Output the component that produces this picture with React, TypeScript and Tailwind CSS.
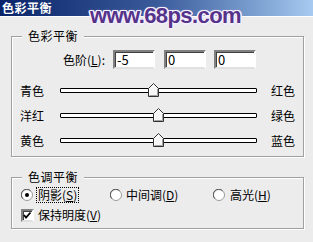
import React from "react";

function Thumb({ cls }: { cls: string }) {
  return (
    <svg className={"absolute top-[-6px] " + cls} width="11" height="14" viewBox="0 0 11 14">
      <polygon points="0.5,5.5 5.5,0.5 10.5,5.5 10.5,13.5 0.5,13.5" fill="#f6f6f6" stroke="#303030" />
      <polyline points="1.5,12.5 1.5,6 5.5,1.8" fill="none" stroke="#ffffff" />
      <polyline points="9.5,6 9.5,12.5 1.5,12.5" fill="none" stroke="#a0a0a0" />
    </svg>
  );
}

function SliderRow({ left, right, thumb }: { left: string; right: string; thumb: string }) {
  return (
    <div className="flex items-center h-[25px]">
      <div className="w-[40px] leading-[14px]">{left}</div>
      <div className="relative w-[197px] h-[5px] border border-black bg-white rounded-[1px]">
        <Thumb cls={thumb} />
      </div>
      <div className="ml-auto leading-[14px]">{right}</div>
    </div>
  );
}

function Box({ value }: { value: string }) {
  return (
    <div className="w-[42px] h-[19px] border-2 border-t-[#808080] border-l-[#808080] border-r-white border-b-[#e0e0e0] bg-white shadow-[inset_1px_1px_0_#404040] flex items-center pl-[2px] text-[13px] leading-none">
      {value}
    </div>
  );
}

function Radio({ checked }: { checked?: boolean }) {
  return (
    <svg width="12" height="12" viewBox="0 0 12 12" className="shrink-0">
      <circle cx="6" cy="6" r="5.5" fill="#ffffff" stroke="#9a9a9a" />
      <path d="M1.8 9.5 A5 5 0 0 1 9.5 1.8" fill="none" stroke="#505050" />
      {checked && <circle cx="6" cy="6" r="2" fill="#000000" />}
    </svg>
  );
}

export default function App() {
  return (
    <div className="relative w-[313px] h-[242px] bg-[#ececec] overflow-hidden font-['Noto_Sans_CJK_SC','Noto_Sans_CJK_JP',sans-serif] text-[12px] text-black">
      <div className="h-[16px] bg-gradient-to-r from-[#0a246a] via-[#3a5a9a] to-[#a6caf0] flex items-center pl-[2px] text-white font-bold text-[12px] leading-none tracking-[0.5px]">
        色彩平衡
      </div>
      <div className="h-px bg-white" />
      <div className="pl-[11px] pr-[9px]">
        <div className="relative mt-[19px] h-[121px] border border-[#a0a0a0] shadow-[inset_1px_1px_0_#ffffff,1px_1px_0_#ffffff] px-[8px] pt-[13px]">
          <div className="absolute left-[10px] top-[-8px] px-[6px] leading-[14px] bg-[#ececec] tracking-[0.5px]">色彩平衡</div>
          <div className="flex items-center h-[19px]">
            <div className="w-[85px] text-right leading-[14px]">
              色阶(<span className="underline">L</span>):
            </div>
            <div className="ml-[8px]">
              <Box value="-5" />
            </div>
            <div className="ml-[9px]">
              <Box value="0" />
            </div>
            <div className="ml-[8px]">
              <Box value="0" />
            </div>
          </div>
          <div className="mt-[9px]">
            <SliderRow left="青色" right="红色" thumb="left-[87px]" />
            <SliderRow left="洋红" right="绿色" thumb="left-[92px]" />
            <SliderRow left="黄色" right="蓝色" thumb="left-[92px]" />
          </div>
        </div>
        <div className="relative mt-[20px] h-[52px] border border-[#a0a0a0] shadow-[inset_1px_1px_0_#ffffff,1px_1px_0_#ffffff] px-[8px] pt-[9px]">
          <div className="absolute left-[10px] top-[-8px] px-[6px] leading-[14px] bg-[#ececec] tracking-[0.5px]">色调平衡</div>
          <div className="flex items-center h-[16px] pl-[1px]">
            <div className="flex items-center w-[89px]">
              <Radio checked />
              <span className="ml-[3px] px-[1px] leading-[14px] border border-dotted border-black">
                阴影(<span className="underline">S</span>)
              </span>
            </div>
            <div className="flex items-center w-[103px]">
              <Radio />
              <span className="ml-[4px] leading-[14px]">
                中间调(<span className="underline">D</span>)
              </span>
            </div>
            <div className="flex items-center">
              <Radio />
              <span className="ml-[5px] leading-[14px]">
                高光(<span className="underline">H</span>)
              </span>
            </div>
          </div>
          <div className="flex items-center h-[16px] mt-[4px] pl-[1px]">
            <div className="w-[13px] h-[13px] border-2 border-t-[#808080] border-l-[#808080] border-r-white border-b-[#e0e0e0] bg-white shadow-[inset_1px_1px_0_#404040] flex items-center justify-center">
              <svg width="9" height="9" viewBox="0 0 9 9">
                <polyline points="1,4 3,6.5 7.5,1.5" fill="none" stroke="#000" strokeWidth="1.8" />
              </svg>
            </div>
            <span className="ml-[4px] leading-[14px]">
              保持明度(<span className="underline">V</span>)
            </span>
          </div>
        </div>
      </div>
      <div className="absolute left-[90px] top-[3px] font-['Liberation_Sans',Arial,sans-serif] font-bold text-[22px] leading-[26px] text-[#55338a] tracking-[-0.6px] [text-shadow:1.5px_0_0_#f4effc,-1.5px_0_0_#f4effc,0_1.5px_0_#f4effc,0_-1.5px_0_#f4effc,1px_1px_0_#f4effc,-1px_-1px_0_#f4effc,1px_-1px_0_#f4effc,-1px_1px_0_#f4effc,0_0_3px_#c9b8ea]">
        www.68ps.com
      </div>
    </div>
  );
}
